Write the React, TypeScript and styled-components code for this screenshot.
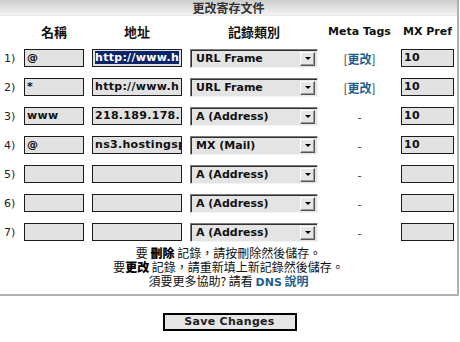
import React from "react";
import styled, { createGlobalStyle } from "styled-components";

const GlobalStyle = createGlobalStyle`
  body {
    margin: 0;
    background: #fff;
    color: #111;
    font-family: "DejaVu Sans", "Noto Sans CJK TC", sans-serif;
  }
`;

const Panel = styled.div`
  width: 459px;
  box-sizing: border-box;
  border-right: 2px solid #b2b2b2;
  border-bottom: 2px solid #b2b2b2;
  padding-bottom: 4px;
`;

const TitleBar = styled.div`
  height: 15px;
  background: linear-gradient(#cdcdcd, #f3f3f3);
  border-bottom: 1px solid #e8e8e8;
  text-align: center;
  font-family: "Noto Sans CJK TC", sans-serif;
  font-size: 12px;
  line-height: 15px;
  font-weight: 700;
  color: #333;
`;

const Grid = styled.div`
  display: grid;
  grid-template-columns: 16px 60px 90px 128px 67px 53px;
  grid-template-rows: 13px;
  grid-auto-rows: 18px;
  column-gap: 8px;
  row-gap: 11px;
  padding-top: 9px;
  align-items: center;
`;

const HeadCell = styled.div<{ $latin?: boolean }>`
  text-align: center;
  white-space: nowrap;
  font-family: ${(p) =>
    p.$latin ? `"DejaVu Sans", sans-serif` : `"Noto Sans CJK TC", sans-serif`};
  font-size: ${(p) => (p.$latin ? "11px" : "13px")};
  font-weight: 700;
  line-height: 13px;
  color: #111;
`;

const RowLabel = styled.div`
  padding-left: 4px;
  font-size: 11px;
  color: #222;
`;

const Field = styled.div`
  height: 18px;
  box-sizing: border-box;
  border: 1px solid #1c1c1c;
  background: #e2e2e2;
  padding: 0 2px;
  font-size: 11px;
  font-weight: 700;
  line-height: 16px;
  letter-spacing: 0.3px;
  white-space: nowrap;
  overflow: hidden;
  color: #111;
`;

const Selected = styled.span`
  background: #0a246a;
  color: #fff;
`;

const SelectBox = styled.div`
  height: 19px;
  box-sizing: border-box;
  display: flex;
  align-items: center;
  border: 1px solid;
  border-color: #7a7a7a #f4f4f4 #f4f4f4 #7a7a7a;
  box-shadow: inset 1px 1px 0 #303030;
  background: #e4e4e4;
  padding: 1px 1px 0 5px;
`;

const SelectText = styled.span`
  flex: 1;
  font-size: 11px;
  font-weight: 700;
  white-space: nowrap;
  color: #111;
`;

const ArrowButton = styled.span`
  width: 15px;
  height: 14px;
  box-sizing: border-box;
  display: flex;
  align-items: center;
  justify-content: center;
  background: #e6e6e6;
  border: 1px solid;
  border-color: #fff #555 #555 #fff;
  box-shadow: inset -1px -1px 0 #999;
  margin-right: 1px;
`;

const Triangle = styled.span`
  width: 0;
  height: 0;
  border-left: 3px solid transparent;
  border-right: 3px solid transparent;
  border-top: 3px solid #000;
`;

const MetaCell = styled.div`
  text-align: center;
  font-family: "Noto Sans CJK TC", sans-serif;
  font-size: 12px;
  color: #333;
`;

const Link = styled.span`
  color: #1f5f8f;
  font-weight: 700;
`;

const Notes = styled.div`
  margin-top: 5px;
  text-align: center;
  font-family: "Noto Sans CJK TC", sans-serif;
  font-size: 12px;
  line-height: 14px;
  color: #111;
`;

const Strong = styled.b`
  font-weight: 900;
  color: #000;
`;

const DnsLink = styled.span`
  color: #1f5f8f;
  font-weight: 700;
  font-family: "DejaVu Sans", "Noto Sans CJK TC", sans-serif;
  font-size: 11px;
`;

const Footer = styled.div`
  display: flex;
  justify-content: center;
  padding-top: 17px;
  padding-right: 1px;
`;

const SaveButton = styled.button`
  width: 134px;
  height: 18px;
  box-sizing: border-box;
  border: 2px solid #000;
  background: #e6e6e6;
  font-family: "DejaVu Sans", sans-serif;
  font-size: 11px;
  font-weight: 700;
  color: #222;
  padding: 0;
  line-height: 14px;
  letter-spacing: 0.3px;
`;

interface IRecord {
  name: string;
  addr: string;
  type: string;
  meta: boolean;
  mx: string;
  selected?: boolean;
}

const records: IRecord[] = [
  { name: "@", addr: "http://www.h", type: "URL Frame", meta: true, mx: "10", selected: true },
  { name: "*", addr: "http://www.h", type: "URL Frame", meta: true, mx: "10" },
  { name: "www", addr: "218.189.178.1", type: "A (Address)", meta: false, mx: "10" },
  { name: "@", addr: "ns3.hostingsp", type: "MX (Mail)", meta: false, mx: "10" },
  { name: "", addr: "", type: "A (Address)", meta: false, mx: "" },
  { name: "", addr: "", type: "A (Address)", meta: false, mx: "" },
  { name: "", addr: "", type: "A (Address)", meta: false, mx: "" },
];

const App: React.FC = () => {
  return (
    <>
      <GlobalStyle />
      <Panel>
        <TitleBar>更改寄存文件</TitleBar>
        <Grid>
          <div />
          <HeadCell>名稱</HeadCell>
          <HeadCell>地址</HeadCell>
          <HeadCell>記錄類別</HeadCell>
          <HeadCell $latin>Meta Tags</HeadCell>
          <HeadCell $latin>MX Pref</HeadCell>
          {records.map((rec, i) => (
            <React.Fragment key={i}>
              <RowLabel>{i + 1})</RowLabel>
              <Field>{rec.name}</Field>
              <Field>
                {rec.selected ? <Selected>{rec.addr}</Selected> : rec.addr}
              </Field>
              <SelectBox>
                <SelectText>{rec.type}</SelectText>
                <ArrowButton>
                  <Triangle />
                </ArrowButton>
              </SelectBox>
              <MetaCell>
                {rec.meta ? (
                  <>
                    [<Link>更改</Link>]
                  </>
                ) : (
                  "-"
                )}
              </MetaCell>
              <Field>{rec.mx}</Field>
            </React.Fragment>
          ))}
        </Grid>
        <Notes>
          <div>
            要 <Strong>刪除</Strong> 記錄，請按刪除然後儲存。
          </div>
          <div>
            要<Strong>更改</Strong> 記錄，請重新填上新記錄然後儲存。
          </div>
          <div>
            須要更多協助? 請看 <DnsLink>DNS</DnsLink> <Link>說明</Link>
          </div>
        </Notes>
      </Panel>
      <Footer>
        <SaveButton>Save Changes</SaveButton>
      </Footer>
    </>
  );
};

export default App;
